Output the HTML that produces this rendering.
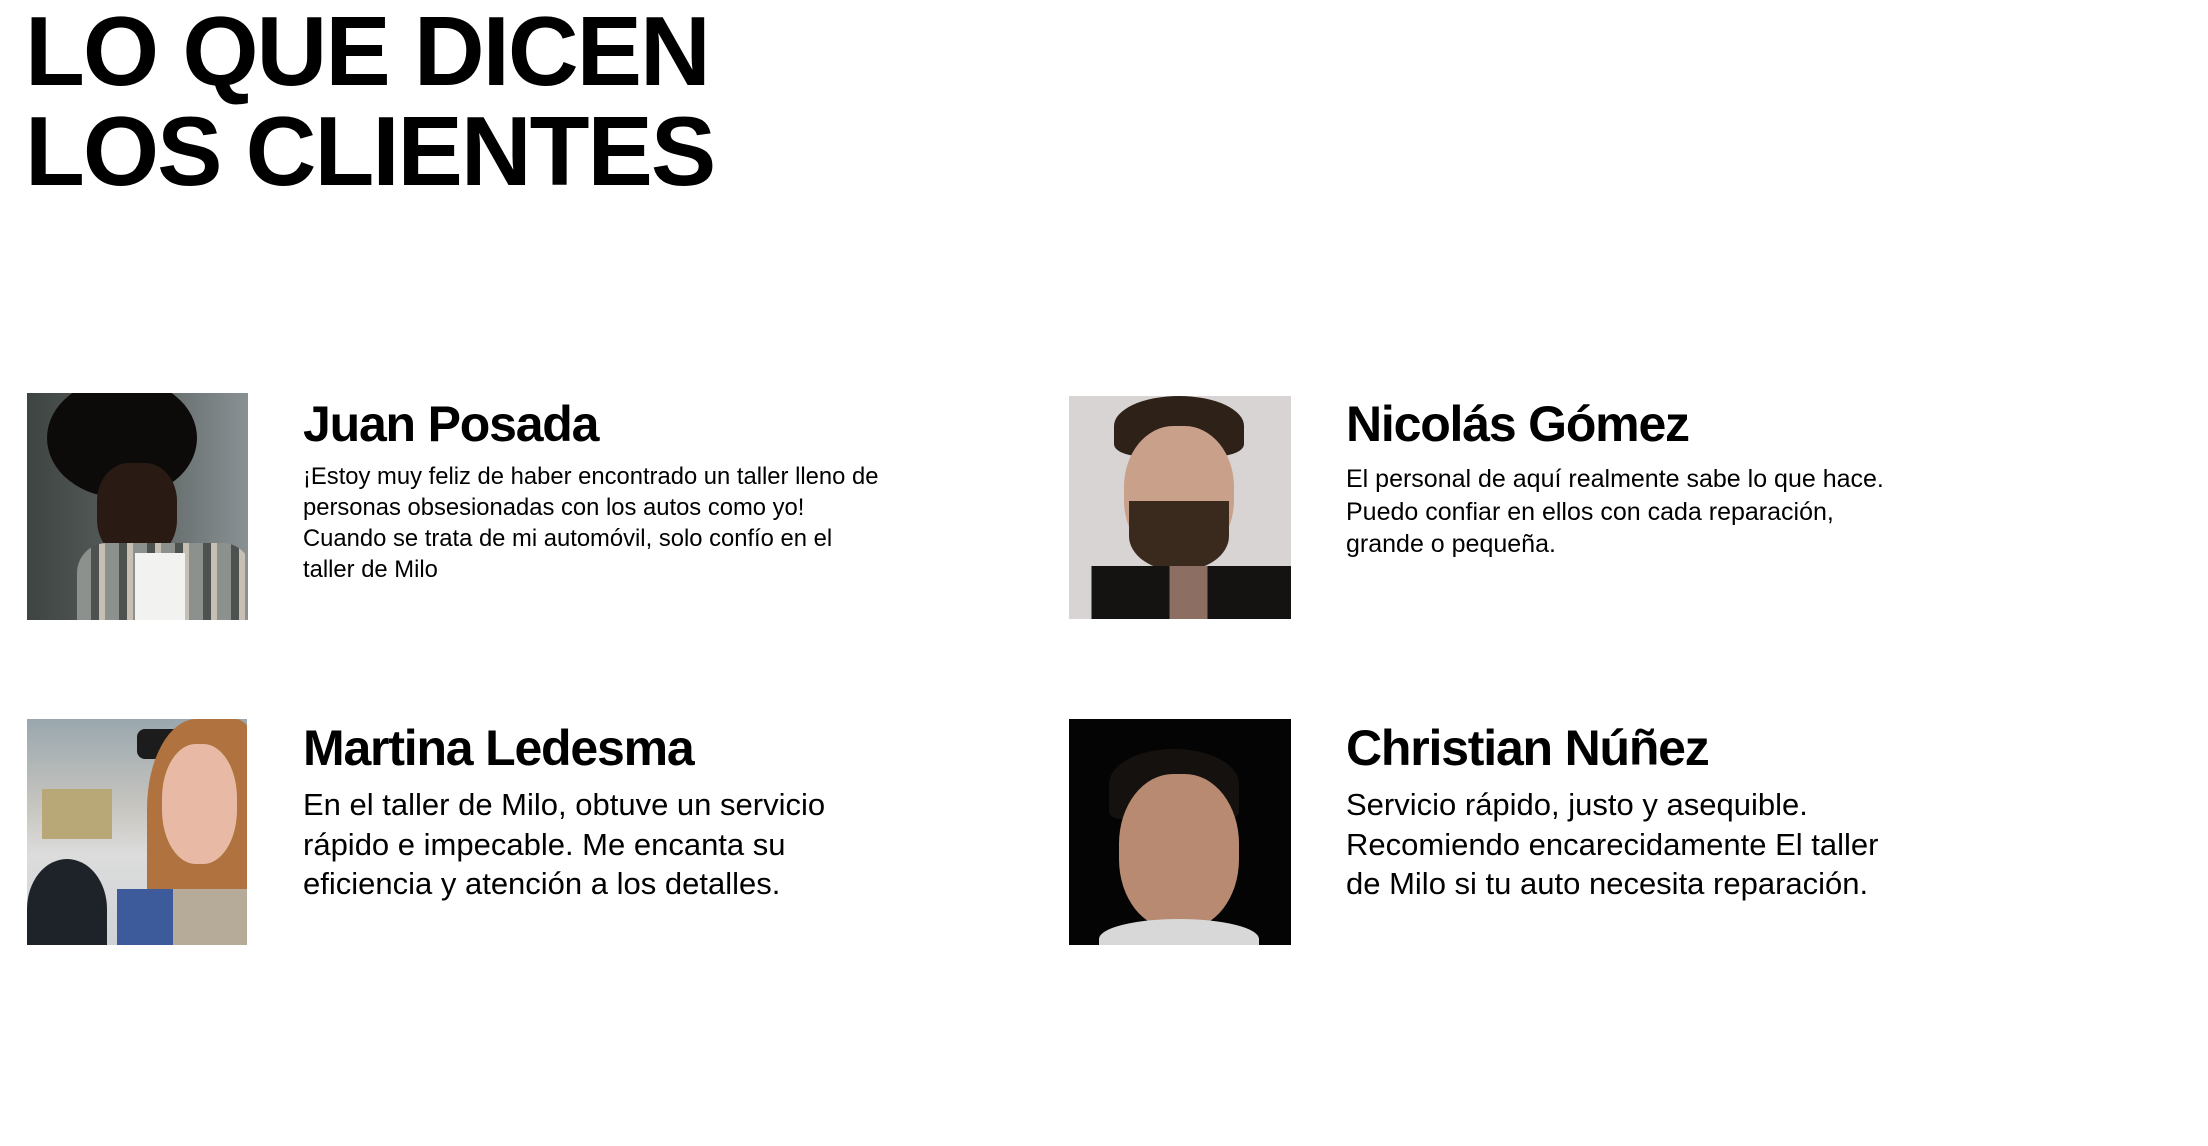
<!DOCTYPE html>
<html><head><meta charset="utf-8"><style>
html,body{margin:0;padding:0;background:#fff;width:2208px;height:1146px;overflow:hidden;position:relative;font-family:"Liberation Sans",Arial,sans-serif;color:#000}
.h{position:absolute;left:25px;top:1px;font-size:98px;line-height:100px;font-weight:700;letter-spacing:-2px;white-space:nowrap}
.n{position:absolute;font-size:50px;line-height:50px;font-weight:700;letter-spacing:-1.2px;white-space:nowrap}
.t{position:absolute;white-space:nowrap}
.img{position:absolute;overflow:hidden}
</style></head><body>
<div class="h">LO QUE DICEN<br>LOS CLIENTES</div>

<div class="img" style="left:27px;top:393px;width:221px;height:227px;background:linear-gradient(90deg,#3e4442 0%,#5a6160 50%,#8a9194 100%)">
  <div style="position:absolute;left:20px;top:-15px;width:150px;height:120px;border-radius:50%;background:#0d0b0a"></div>
  <div style="position:absolute;left:70px;top:70px;width:80px;height:95px;border-radius:40%;background:#2a1a14"></div>
  <div style="position:absolute;left:50px;top:150px;width:175px;height:100px;background:repeating-linear-gradient(90deg,#8d918e 0 14px,#4d514f 14px 22px,#c5c0b3 22px 28px);border-radius:30px 30px 0 0"></div>
  <div style="position:absolute;left:108px;top:160px;width:50px;height:80px;background:#f2f2f0"></div>
</div>

<div class="img" style="left:1069px;top:396px;width:222px;height:223px;background:#d8d4d4">
  <div style="position:absolute;left:45px;top:0;width:130px;height:60px;border-radius:50% 50% 20% 20%;background:#2e2218"></div>
  <div style="position:absolute;left:55px;top:30px;width:110px;height:135px;border-radius:45%;background:#c9a08a"></div>
  <div style="position:absolute;left:60px;top:105px;width:100px;height:70px;border-radius:0 0 50% 50%;background:#3a2a1e"></div>
  <div style="position:absolute;left:0;top:170px;width:223px;height:60px;background:linear-gradient(90deg,transparent 0 10%,#151212 10% 45%,#8c6f62 45% 62%,#151212 62%)"></div>
</div>

<div class="n" style="left:303px;top:399px">Juan Posada</div>
<div class="t" style="left:303px;top:461px;font-size:23.8px;line-height:31px">¡Estoy muy feliz de haber encontrado un taller lleno de<br>personas obsesionadas con los autos como yo!<br>Cuando se trata de mi automóvil, solo confío en el<br>taller de Milo</div>

<div class="n" style="left:1346px;top:399px">Nicolás Gómez</div>
<div class="t" style="left:1346px;top:463px;font-size:25px;line-height:32.5px">El personal de aquí realmente sabe lo que hace.<br>Puedo confiar en ellos con cada reparación,<br>grande o pequeña.</div>

<div class="img" style="left:27px;top:719px;width:220px;height:226px;background:linear-gradient(180deg,#9aa7ae 0%,#c8c6c0 40%,#dcdcdc 60%,#cfd3d6 100%)">
  <div style="position:absolute;left:15px;top:70px;width:70px;height:50px;background:#b8a878"></div>
  <div style="position:absolute;left:110px;top:10px;width:50px;height:30px;border-radius:8px;background:#1c1c1c"></div>
  <div style="position:absolute;left:120px;top:0;width:110px;height:200px;border-radius:45% 20% 0 0;background:#b0723e"></div>
  <div style="position:absolute;left:135px;top:25px;width:75px;height:120px;border-radius:45%;background:#e8b9a4"></div>
  <div style="position:absolute;left:0;top:140px;width:80px;height:100px;border-radius:50% 50% 0 0;background:#1d2328"></div>
  <div style="position:absolute;left:90px;top:170px;width:140px;height:70px;background:linear-gradient(90deg,#3d5a9a 0 40%,#b6aa98 40%)"></div>
</div>

<div class="img" style="left:1069px;top:719px;width:222px;height:226px;background:#050404">
  <div style="position:absolute;left:40px;top:30px;width:130px;height:70px;border-radius:50% 50% 10% 10%;background:#15110e"></div>
  <div style="position:absolute;left:50px;top:55px;width:120px;height:155px;border-radius:45%;background:#b88a72"></div>
  <div style="position:absolute;left:30px;top:200px;width:160px;height:40px;border-radius:50% 50% 0 0;background:#d8d8d8"></div>
</div>

<div class="n" style="left:303px;top:723px">Martina Ledesma</div>
<div class="t" style="left:303px;top:785px;font-size:31px;line-height:39.5px">En el taller de Milo, obtuve un servicio<br>rápido e impecable. Me encanta su<br>eficiencia y atención a los detalles.</div>

<div class="n" style="left:1346px;top:723px">Christian Núñez</div>
<div class="t" style="left:1346px;top:785px;font-size:31px;line-height:39.5px">Servicio rápido, justo y asequible.<br>Recomiendo encarecidamente El taller<br>de Milo si tu auto necesita reparación.</div>
</body></html>
